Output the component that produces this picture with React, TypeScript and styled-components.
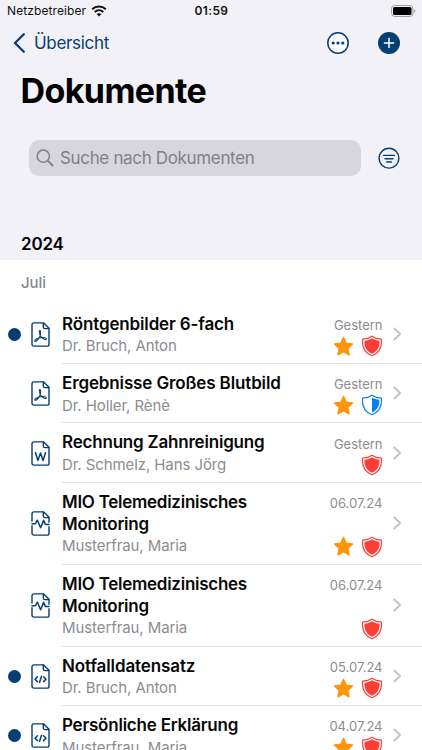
import React from "react";
import styled, { createGlobalStyle } from "styled-components";

const NAVY = "#053e73";

const GlobalStyle = createGlobalStyle`
  * { box-sizing: border-box; }
  body {
    margin: 0;
    overflow: hidden;
    background: #fff;
    font-family: Inter, "Liberation Sans", sans-serif;
    -webkit-font-smoothing: antialiased;
  }
  h1, h2, h3, p { margin: 0; }
  svg { display: block; flex: none; }
`;

const Screen = styled.main`
  width: 422px;
  height: 750px;
  overflow: hidden;
  display: flex;
  flex-direction: column;
  background: #fff;
`;

const Header = styled.header`
  flex: none;
  height: 260px;
  background: #f2f1f8;
  display: flex;
  flex-direction: column;
`;

const StatusBar = styled.div`
  display: grid;
  grid-template-columns: 1fr auto 1fr;
  align-items: center;
  height: 21px;
  padding: 0 6px 0 7px;
  font-size: 12px;
  color: #111;
`;

const Carrier = styled.div`
  display: flex;
  align-items: center;
  gap: 5px;
  letter-spacing: 0.1px;
`;

const Clock = styled.span`
  font-weight: 600;
  letter-spacing: 0.35px;
`;

const BatterySlot = styled.div`
  display: flex;
  justify-content: flex-end;
`;

const NavBar = styled.nav`
  display: flex;
  align-items: center;
  height: 44px;
  padding: 0 22px 0 13px;
`;

const BackButton = styled.button`
  display: flex;
  align-items: center;
  gap: 8px;
  margin-right: auto;
  padding: 0;
  border: 0;
  background: none;
  color: ${NAVY};
  font: 400 17px/22px Inter, sans-serif;
  letter-spacing: -0.32px;
`;

const IconButton = styled.button<{ $gap?: number }>`
  padding: 0;
  border: 0;
  background: none;
  color: ${NAVY};
  margin-left: ${(p) => p.$gap ?? 0}px;
`;

const Title = styled.h1`
  height: 52px;
  padding-left: 20.5px;
  font-size: 34px;
  line-height: 51px;
  font-weight: 700;
  letter-spacing: -0.6px;
  color: #000;
`;

const SearchRow = styled.div`
  display: flex;
  align-items: center;
  margin-top: 23px;
  padding: 0 22px 0 29px;
`;

const SearchField = styled.div`
  display: flex;
  align-items: center;
  gap: 6px;
  width: 332px;
  height: 36px;
  padding-left: 7px;
  border-radius: 10px;
  background: #d7d6dc;
  color: #808086;
  font-size: 17px;
  line-height: 22px;
  letter-spacing: -0.34px;
`;

const Year = styled.h2`
  margin-top: auto;
  padding: 0 21px 5px;
  font-size: 17px;
  line-height: 22px;
  font-weight: 600;
  letter-spacing: -0.2px;
`;

const Month = styled.h3`
  flex: none;
  height: 44.9px;
  padding-left: 21px;
  font-size: 15px;
  line-height: 45px;
  font-weight: 500;
  letter-spacing: -0.05px;
  color: #87878b;
`;

const List = styled.ul`
  margin: 0;
  padding: 0;
  list-style: none;
`;

const Row = styled.li<{ $tall?: boolean }>`
  display: grid;
  grid-template-columns: 31px 31px 1fr;
  align-items: center;
  height: ${(p) => (p.$tall ? 82 : 59.3)}px;
`;

const Unread = styled.i<{ $on?: boolean }>`
  width: 13px;
  height: 13px;
  margin-left: 8px;
  border-radius: 50%;
  background: ${(p) => (p.$on ? NAVY : "transparent")};
`;

const RowBody = styled.div`
  display: flex;
  height: 100%;
  padding: 8px 20.5px 0 0;
  border-bottom: 1px solid #e3e3e6;
`;

const Texts = styled.div`
  flex: 1;
  white-space: pre-line;
`;

const Name = styled.p<{ $track: number }>`
  font-size: 17px;
  line-height: 22px;
  font-weight: 600;
  letter-spacing: ${(p) => p.$track}px;
  color: #080808;
`;

const Person = styled.p`
  padding-top: 0.6px;
  font-size: 15px;
  line-height: 22px;
  letter-spacing: -0.09px;
  color: #8c8c90;
`;

const Meta = styled.div`
  display: flex;
  flex-direction: column;
  justify-content: space-between;
  align-items: flex-end;
  padding: 3.2px 0 6px;
`;

const DateText = styled.span`
  margin-right: 0.5px;
  font-size: 13px;
  line-height: 18px;
  letter-spacing: 0;
  color: #8c8c90;
`;

const Badges = styled.div`
  display: flex;
  gap: 7px;
  height: 22px;
  align-items: center;
`;

const Disclosure = styled.div`
  display: flex;
  align-items: center;
  margin: -8px 0 0 9.5px;
`;

const Wifi = () => (
  <svg width="16" height="12" viewBox="0 0 16 12" fill="none">
    <path d="M1.200 4.200C5 .6 11 .6 14.800 4.200" stroke="#111" strokeWidth="2" />
    <path d="M3.700 6.900C6.200 4.700 9.800 4.700 12.300 6.900" stroke="#111" strokeWidth="2" />
    <path d="M8 11.500 5.600 9.100C7 7.900 9 7.900 10.400 9.100Z" fill="#111" />
  </svg>
);

const Battery = () => (
  <svg width="25" height="12" viewBox="0 0 25 12">
    <rect x=".6" y=".6" width="21.300" height="10.800" rx="3" fill="#f8f8fb" stroke="#98989c" />
    <rect x="2" y="2" width="18.500" height="8" rx="1.600" fill="#000" />
    <path d="M23.200 4.200c1.600.5 1.600 3.100 0 3.600z" fill="#98989c" />
  </svg>
);

const Back = () => (
  <svg width="13" height="20" viewBox="0 0 13 20" fill="none">
    <path d="M10.800 1.300 2 10l8.800 8.700" stroke={NAVY} strokeWidth="2.300" strokeLinecap="round" strokeLinejoin="round" />
  </svg>
);

const More = () => (
  <svg width="22" height="22" viewBox="0 0 22 22">
    <circle cx="11" cy="11" r="10.200" fill="#fafaff" stroke={NAVY} strokeWidth="1.500" />
    <g fill={NAVY}>
      <circle cx="6.200" cy="11" r="1.600" />
      <circle cx="11" cy="11" r="1.600" />
      <circle cx="15.800" cy="11" r="1.600" />
    </g>
  </svg>
);

const Add = () => (
  <svg width="22" height="22" viewBox="0 0 22 22">
    <circle cx="11" cy="11" r="11" fill={NAVY} />
    <path d="M11 6.400v9.200M6.400 11h9.200" stroke="#fff" strokeWidth="1.500" strokeLinecap="round" />
  </svg>
);

const Filter = () => (
  <svg width="22" height="22" viewBox="0 0 22 22" fill="none" stroke={NAVY} strokeLinecap="round">
    <circle cx="11" cy="11.200" r="9.900" strokeWidth="1.400" />
    <path d="M5.600 8.400h10.800M7 11.700h8M8.700 15h4.600" strokeWidth="1.400" />
  </svg>
);

const Magnifier = () => (
  <svg width="18" height="18" viewBox="0 0 18 18" fill="none" stroke="#808086" strokeWidth="1.500" strokeLinecap="round">
    <circle cx="7.300" cy="7.200" r="6.100" />
    <path d="m11.900 11.800 4.700 4.700" strokeWidth="1.900" />
  </svg>
);

type Kind = "pdf" | "word" | "mio" | "code";

const FileIcon = ({ kind }: { kind: Kind }) => (
  <svg width="19" height="25" viewBox="0 0 19 25" fill="none" stroke={NAVY} strokeWidth="1.400" strokeLinejoin="round" strokeLinecap="round">
    {kind === "mio" ? (
      <>
        <path d="M1 10V2.800Q1 .9 2.900.9H12.700L18 6.200V11.200M18 15.800V22.200Q18 24.100 16.100 24.100H2.900Q1 24.100 1 22.200V14.800" />
        <path d="M1 12.700H4.400L6.400 9.200L9.600 16.800L12.600 9.400L14.400 13.400H18" strokeWidth="1.500" />
      </>
    ) : (
      <path d="M2.900.9H12.700L18 6.200V22.200Q18 24.100 16.100 24.100H2.900Q1 24.100 1 22.200V2.800Q1 .9 2.900.9Z" />
    )}
    <path d="M12.300 1.100V4.900Q12.300 6.600 14 6.600H17.800" />
    {kind === "pdf" && (
      <path d="M8.900 8.600C7.700 8.800 8.500 11.700 9.500 13.700C11 16.400 13.900 18.200 15.200 17.300C16 16 12.100 15 8.900 15.700C5.800 16.300 3.300 18.100 3.900 19.100C4.900 20.100 7.700 17 8.900 14.200C9.900 11.700 9.900 8.600 8.900 8.600Z" strokeWidth="1.100" />
    )}
    {kind === "word" && <path d="m4.500 11.800 2.400 7.600 2.600-7.400 2.600 7.400 2.400-7.600" strokeWidth="1.500" />}
    {kind === "code" && <path d="m6.400 12.800-2.400 2.400 2.400 2.400M12.600 12.800l2.400 2.400-2.400 2.400M10.500 12.200 8.500 18.400" strokeWidth="1.500" />}
  </svg>
);

const Star = () => (
  <svg width="21" height="21" viewBox="0 0 21 21">
    <path
      d="M10.500 1.500 13.100 7.300 19.400 8 14.700 12.300 16 18.700 10.500 15.500 5 18.700 6.300 12.300 1.600 8 7.900 7.300Z"
      fill="#ff9509" stroke="#ff9509" strokeWidth="1.600" strokeLinejoin="round"
    />
  </svg>
);

const Shield = ({ half }: { half?: boolean }) => (
  <svg width="22" height="22" viewBox="0 0 22 22">
    <path
      d="M11 1.200C13.500 3 16.700 3.900 20.300 4.100C21.200 11.600 18.200 18 11 20.800C3.800 18 .8 11.600 1.700 4.100C5.300 3.900 8.500 3 11 1.200Z"
      fill="none" stroke={half ? "#087bf5" : "#fb3d35"} strokeWidth="1.200" strokeLinejoin="round"
    />
    <path
      d={half
        ? "M11 3.600C13.300 5 15.600 5.600 18.300 5.800C18.700 11.500 16.300 16.200 11 18.600Z"
        : "M11 3.300C13.300 4.800 15.700 5.500 18.500 5.700C19 11.600 16.500 16.400 11 18.800C5.500 16.400 3 11.600 3.500 5.700C6.300 5.500 8.700 4.800 11 3.300Z"}
      fill={half ? "#087bf5" : "#fb3d35"}
    />
  </svg>
);

const Chevron = () => (
  <svg width="9" height="14" viewBox="0 0 9 14" fill="none">
    <path d="m1.300 1.500 5.800 5.500-5.800 5.500" stroke="#c2c2c6" strokeWidth="1.800" strokeLinecap="round" strokeLinejoin="round" />
  </svg>
);

interface Doc {
  name: string;
  person: string;
  date: string;
  kind: Kind;
  track: number;
  unread?: boolean;
  star?: boolean;
  half?: boolean;
  tall?: boolean;
}

const docs: Doc[] = [
  { name: "Röntgenbilder 6-fach", person: "Dr. Bruch, Anton", date: "Gestern", kind: "pdf", track: -0.14, unread: true, star: true },
  { name: "Ergebnisse Großes Blutbild", person: "Dr. Holler, Rènè", date: "Gestern", kind: "pdf", track: -0.13, star: true, half: true },
  { name: "Rechnung Zahnreinigung", person: "Dr. Schmelz, Hans Jörg", date: "Gestern", kind: "word", track: -0.2 },
  { name: "MIO Telemedizinisches\nMonitoring", person: "Musterfrau, Maria", date: "06.07.24", kind: "mio", track: -0.27, star: true, tall: true },
  { name: "MIO Telemedizinisches\nMonitoring", person: "Musterfrau, Maria", date: "06.07.24", kind: "mio", track: -0.27, tall: true },
  { name: "Notfalldatensatz", person: "Dr. Bruch, Anton", date: "05.07.24", kind: "code", track: -0.11, unread: true, star: true },
  { name: "Persönliche Erklärung", person: "Musterfrau, Maria", date: "04.07.24", kind: "code", track: -0.22, unread: true, star: true },
];

export default function App() {
  return (
    <>
      <GlobalStyle />
      <Screen>
        <Header>
          <StatusBar>
            <Carrier>Netzbetreiber <Wifi /></Carrier>
            <Clock>01:59</Clock>
            <BatterySlot><Battery /></BatterySlot>
          </StatusBar>
          <NavBar>
            <BackButton><Back />Übersicht</BackButton>
            <IconButton aria-label="Mehr"><More /></IconButton>
            <IconButton aria-label="Hinzufügen" $gap={29}><Add /></IconButton>
          </NavBar>
          <Title>Dokumente</Title>
          <SearchRow>
            <SearchField><Magnifier />Suche nach Dokumenten</SearchField>
            <IconButton aria-label="Filter" $gap={17}><Filter /></IconButton>
          </SearchRow>
          <Year>2024</Year>
        </Header>
        <Month>Juli</Month>
        <List>
          {docs.map((d, i) => (
            <Row key={i} $tall={d.tall}>
              <Unread $on={d.unread} />
              <FileIcon kind={d.kind} />
              <RowBody>
                <Texts>
                  <Name $track={d.track}>{d.name}</Name>
                  <Person>{d.person}</Person>
                </Texts>
                <Meta>
                  <DateText>{d.date}</DateText>
                  <Badges>
                    {d.star && <Star />}
                    <Shield half={d.half} />
                  </Badges>
                </Meta>
                <Disclosure><Chevron /></Disclosure>
              </RowBody>
            </Row>
          ))}
        </List>
      </Screen>
    </>
  );
}
